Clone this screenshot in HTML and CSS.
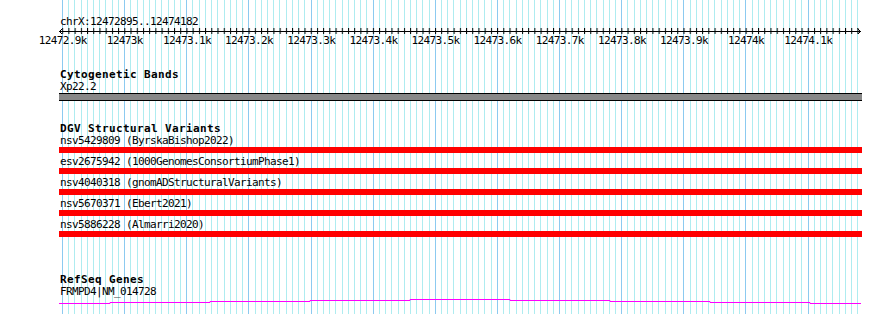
FILE: index.html
```html
<!DOCTYPE html>
<html lang="en">
<head>
<meta charset="UTF-8" />
<meta name="viewport" content="width=device-width, initial-scale=1.0" />
<title>chrX:12472895..12474182</title>
<link rel="stylesheet" href="styles.css">
</head>
<body>
<div class="browser">
  <div class="grid"></div>
  <div class="content">
    <div class="ruler">
      <div class="label locus">chrX:12472895..12474182</div>
      <svg class="axis" width="890" height="7" viewBox="0 0 890 7">
        <defs>
          <pattern id="tick" x="62.2" y="0" width="6.213" height="7" patternUnits="userSpaceOnUse">
            <rect x="0" y="1" width="1" height="6" fill="#000" />
          </pattern>
        </defs>
        <rect x="62.2" y="0" width="797" height="7" fill="url(#tick)" />
        <line x1="59" y1="4.5" x2="861" y2="4.5" stroke="#000" stroke-width="1" />
        <polyline points="62.5,1.5 59.5,4.5 62.5,7.5" fill="none" stroke="#000" stroke-width="1" />
        <polyline points="857.5,1.5 860.5,4.5 857.5,7.5" fill="none" stroke="#000" stroke-width="1" />
      </svg>
      <div class="scale">
        <span style="left: 62.7px">12472.9k</span>
        <span style="left: 124.8px">12473k</span>
        <span style="left: 187px">12473.1k</span>
        <span style="left: 249.1px">12473.2k</span>
        <span style="left: 311.2px">12473.3k</span>
        <span style="left: 373.4px">12473.4k</span>
        <span style="left: 435.5px">12473.5k</span>
        <span style="left: 497.6px">12473.6k</span>
        <span style="left: 559.7px">12473.7k</span>
        <span style="left: 621.9px">12473.8k</span>
        <span style="left: 684px">12473.9k</span>
        <span style="left: 746.1px">12474k</span>
        <span style="left: 808.3px">12474.1k</span>
      </div>
    </div>

    <section class="track cyto">
      <h3 class="label">Cytogenetic Bands</h3>
      <div class="label">Xp22.2</div>
      <div class="band"></div>
    </section>

    <section class="track dgv">
      <h3 class="label">DGV Structural Variants</h3>
      <div class="sv">
        <div class="label">nsv5429809 (ByrskaBishop2022)</div>
        <div class="bar"></div>
      </div>
      <div class="sv">
        <div class="label">esv2675942 (1000GenomesConsortiumPhase1)</div>
        <div class="bar"></div>
      </div>
      <div class="sv">
        <div class="label">nsv4040318 (gnomADStructuralVariants)</div>
        <div class="bar"></div>
      </div>
      <div class="sv">
        <div class="label">nsv5670371 (Ebert2021)</div>
        <div class="bar"></div>
      </div>
      <div class="sv">
        <div class="label">nsv5886228 (Almarri2020)</div>
        <div class="bar"></div>
      </div>
    </section>

    <section class="track refseq">
      <h3 class="label">RefSeq Genes</h3>
      <div class="label">FRMPD4|NM_014728</div>
      <svg class="gene" width="890" height="9" viewBox="0 0 890 9">
        <polyline points="59,6.5 110,6.5 110,5.5 210,5.5 210,4.5 310,4.5 310,3.5 410,3.5 410,2.5 510,2.5 510,3.5 610,3.5 610,4.5 710,4.5 710,5.5 810,5.5 810,6.5 861,6.5" fill="none" stroke="#ff00ff" stroke-width="1" />
      </svg>
    </section>
  </div>
</div>
</body>
</html>
```

FILE: styles.css
```css
body {
  margin: 0;
  background: #fff;
}
.browser {
  position: relative;
  width: 890px;
  height: 314px;
  overflow: hidden;
  font-family: "DejaVu Sans Mono", "Liberation Mono", monospace;
  font-size: 11px;
  line-height: 12px;
  letter-spacing: -0.62px;
  color: #000;
}
.grid {
  position: absolute;
  top: 0;
  left: 62.2px;
  width: 797px;
  height: 100%;
  background:
    repeating-linear-gradient(90deg, #8ccaf0 0 1px, transparent 1px 62.13px),
    repeating-linear-gradient(90deg, #aeecf0 0 1px, transparent 1px 6.213px);
}
.content {
  position: relative;
}
.label {
  padding: 1px 0 0 60px;
  height: 11px;
  white-space: nowrap;
}
.locus {
  padding-top: 16px;
}
.axis, .gene {
  display: block;
}
.scale {
  position: relative;
  height: 12px;
}
.scale span {
  position: absolute;
  top: 1px;
  transform: translateX(-50%);
  white-space: nowrap;
}
h3 {
  margin: 0;
  font-size: 11px;
  font-weight: bold;
  letter-spacing: 0.38px;
}
.cyto h3 {
  margin-top: 22px;
}
.band {
  margin: 1px 0 0 59px;
  width: 803px;
  height: 6px;
  background: #888;
  border-top: 1px solid #000;
  border-bottom: 1px solid #000;
}
.dgv h3 {
  margin-top: 21px;
}
.bar {
  margin: 1px 0 2px 59px;
  width: 803px;
  height: 6px;
  background: #ff0000;
}
.refseq h3 {
  margin-top: 36px;
}
```
